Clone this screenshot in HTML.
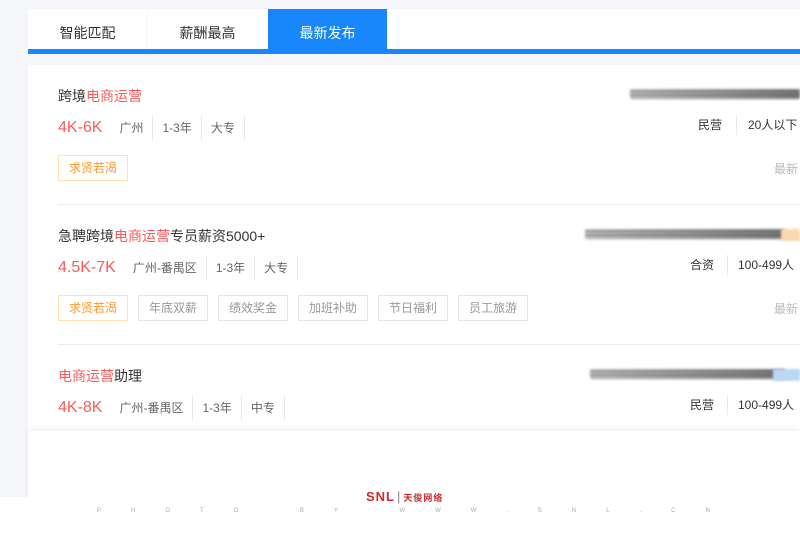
<!DOCTYPE html>
<html><head><meta charset="utf-8"><style>
*{margin:0;padding:0;box-sizing:border-box}
body{width:800px;height:533px;overflow:hidden;background:#fff;position:relative;font-family:"Liberation Sans","Noto Sans CJK SC",sans-serif;color:#333}
.a{position:absolute;white-space:nowrap}
.tab{position:absolute;top:9px;height:40px;width:119px;background:#fff;font-size:14px;text-align:center;line-height:48px;color:#333}
.red{color:#fc5a5a}
.sal{font-size:16px;color:#fc5a5a}
.attr{font-size:12px;color:#666;line-height:24px;padding:0 9px;border-left:1px solid #e8e8e8}
.tag{position:absolute;height:26px;width:70px;border:1px solid #e5e5e5;font-size:12px;color:#999;text-align:center;line-height:24px}
.tag.o{border-color:#fde2b1;color:#fa9a2a}
.blur{position:absolute;height:10px;background:repeating-linear-gradient(180deg,#eee 0,#666 2px,#ccc 4px),linear-gradient(90deg,#fff,#999);background-blend-mode:multiply;filter:blur(1.2px);border-radius:2px;opacity:.9}
.hr{position:absolute;left:58px;right:0;height:1px;background:#ececec}
</style></head><body>
<div class="a" style="left:0;top:0;width:800px;height:497px;background:#f4f6f9"></div>
<div class="tab" style="left:28px">智能匹配</div>
<div class="tab" style="left:148px">薪酬最高</div>
<div class="tab" style="left:268px;background:#1787fb;color:#fff">最新发布</div>
<div class="a" style="left:388px;top:9px;width:412px;height:40px;background:#fff"></div>
<div class="a" style="left:28px;top:49px;width:772px;height:5px;background:#1787fb"></div>
<div class="a" style="left:28px;top:65px;width:772px;height:366px;background:#fff"></div>

<div class="a" style="left:58px;top:86px;font-size:14px">跨境<span class="red">电商运营</span></div>
<div class="a" style="left:58px;top:116px;display:flex;align-items:center"><span class="sal" style="margin-right:8px">4K-6K</span><span class="attr" style="border:0">广州</span><span class="attr">1-3年</span><span class="attr" style="border-right:1px solid #e8e8e8">大专</span></div>
<div class="tag o" style="left:58px;top:155px">求贤若渴</div>
<div class="blur" style="left:630px;top:89px;width:170px"></div>
<div class="a" style="left:698px;top:116px;font-size:12px;line-height:18px">民营</div>
<div class="a" style="left:736px;top:115px;width:1px;height:20px;background:#e8e8e8"></div>
<div class="a" style="left:748px;top:116px;font-size:12px;line-height:18px">20人以下</div>
<div class="a" style="left:774px;top:160px;font-size:12px;color:#bbb">最新</div>
<div class="hr" style="top:204px"></div>

<div class="a" style="left:58px;top:226px;font-size:14px">急聘跨境<span class="red">电商运营</span>专员薪资5000+</div>
<div class="a" style="left:58px;top:256px;display:flex;align-items:center"><span class="sal" style="margin-right:8px">4.5K-7K</span><span class="attr" style="border:0">广州-番禺区</span><span class="attr">1-3年</span><span class="attr" style="border-right:1px solid #e8e8e8">大专</span></div>
<div class="tag o" style="left:58px;top:295px">求贤若渴</div>
<div class="tag" style="left:138px;top:295px">年底双薪</div>
<div class="tag" style="left:218px;top:295px">绩效奖金</div>
<div class="tag" style="left:298px;top:295px">加班补助</div>
<div class="tag" style="left:378px;top:295px">节日福利</div>
<div class="tag" style="left:458px;top:295px">员工旅游</div>
<div class="blur" style="left:585px;top:229px;width:200px"></div>
<div class="a" style="left:781px;top:229px;width:19px;height:12px;background:#fbd9b0;filter:blur(1px)"></div>
<div class="a" style="left:690px;top:256px;font-size:12px;line-height:18px">合资</div>
<div class="a" style="left:727px;top:255px;width:1px;height:20px;background:#e8e8e8"></div>
<div class="a" style="left:738px;top:256px;font-size:12px;line-height:18px">100-499人</div>
<div class="a" style="left:774px;top:300px;font-size:12px;color:#bbb">最新</div>
<div class="hr" style="top:344px"></div>

<div class="a" style="left:58px;top:366px;font-size:14px"><span class="red">电商运营</span>助理</div>
<div class="a" style="left:58px;top:396px;display:flex;align-items:center"><span class="sal" style="margin-right:8px">4K-8K</span><span class="attr" style="border:0">广州-番禺区</span><span class="attr">1-3年</span><span class="attr" style="border-right:1px solid #e8e8e8">中专</span></div>
<div class="blur" style="left:590px;top:369px;width:195px"></div>
<div class="a" style="left:773px;top:369px;width:27px;height:12px;background:#bcd6f5;filter:blur(1px)"></div>
<div class="a" style="left:690px;top:396px;font-size:12px;line-height:18px">民营</div>
<div class="a" style="left:727px;top:395px;width:1px;height:20px;background:#e8e8e8"></div>
<div class="a" style="left:738px;top:396px;font-size:12px;line-height:18px">100-499人</div>

<div class="a" style="left:28px;top:431px;width:772px;height:102px;background:#fff;box-shadow:0 -3px 6px rgba(0,0,0,0.05)"></div>
<div class="a" style="left:0;top:497px;width:800px;height:36px;background:#fff"></div>
<div class="a" style="left:366px;top:489px;font-size:13px;font-weight:bold;color:#d0282e;letter-spacing:1px">SNL<span style="color:#888;font-weight:normal;margin:0 2px">|</span><span style="font-size:9px">天俊网络</span></div>
<div class="a" style="left:97px;top:508px;font-size:6px;color:#aaa;letter-spacing:30px">PHOTO BY WWW.SNL.CN</div>
</body></html>
